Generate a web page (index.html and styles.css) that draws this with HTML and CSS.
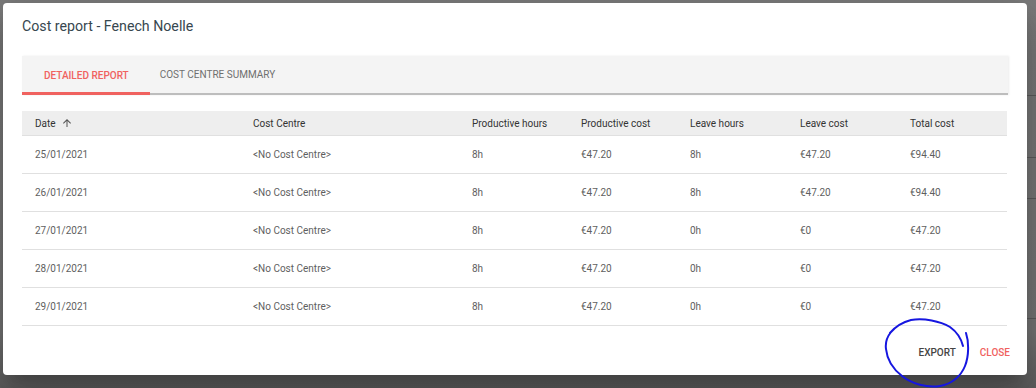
FILE: index.html
```html
<!DOCTYPE html>
<html lang="en">
<head>
    <meta charset="UTF-8">
    <title>Cost report - Fenech Noelle</title>
    <link rel="stylesheet" href="styles.css">
</head>
<body>
    <div class="page-behind">
        <div class="edge-right">
            <span class="edge-line" style="top: 95px"></span>
            <span class="edge-line" style="top: 157px"></span>
            <span class="edge-line" style="top: 198px"></span>
            <span class="edge-line" style="top: 318px"></span>
        </div>
    </div>

    <div class="dialog">
        <h1 class="dialog-title">Cost report - Fenech Noelle</h1>

        <div class="tabs">
            <div class="tab active">Detailed report</div>
            <div class="tab">Cost centre summary</div>
        </div>

        <table class="report">
            <colgroup>
                <col style="width: 218px">
                <col style="width: 219px">
                <col style="width: 109px">
                <col style="width: 109px">
                <col style="width: 110px">
                <col style="width: 110px">
                <col>
            </colgroup>
            <thead>
                <tr>
                    <th>
                        <span class="sort">Date
                            <svg class="sort-icon" viewBox="0 0 24 24" width="12" height="12">
                                <path d="M4 12l1.41 1.41L11 7.83V20h2V7.83l5.58 5.59L20 12l-8-8-8 8z" fill="#555"/>
                            </svg>
                        </span>
                    </th>
                    <th>Cost Centre</th>
                    <th>Productive hours</th>
                    <th>Productive cost</th>
                    <th>Leave hours</th>
                    <th>Leave cost</th>
                    <th>Total cost</th>
                </tr>
            </thead>
            <tbody>
                <tr>
                    <td>25/01/2021</td><td>&lt;No Cost Centre&gt;</td><td>8h</td><td>€47.20</td><td>8h</td><td>€47.20</td><td>€94.40</td>
                </tr>
                <tr>
                    <td>26/01/2021</td><td>&lt;No Cost Centre&gt;</td><td>8h</td><td>€47.20</td><td>8h</td><td>€47.20</td><td>€94.40</td>
                </tr>
                <tr>
                    <td>27/01/2021</td><td>&lt;No Cost Centre&gt;</td><td>8h</td><td>€47.20</td><td>0h</td><td>€0</td><td>€47.20</td>
                </tr>
                <tr>
                    <td>28/01/2021</td><td>&lt;No Cost Centre&gt;</td><td>8h</td><td>€47.20</td><td>0h</td><td>€0</td><td>€47.20</td>
                </tr>
                <tr>
                    <td>29/01/2021</td><td>&lt;No Cost Centre&gt;</td><td>8h</td><td>€47.20</td><td>0h</td><td>€0</td><td>€47.20</td>
                </tr>
            </tbody>
        </table>

        <div class="actions">
            <button class="btn">Export</button>
            <button class="btn btn-close">Close</button>
        </div>
    </div>

    <!-- hand drawn mark around the export button -->
    <svg class="scribble" viewBox="0 0 1036 388" width="1036" height="388">
        <path d="M890 333 C896 326 903 322 911 320 C924 318 940 321 950 327 C957 332 961 338 963 346
                 M966 333 C969 342 969 356 965 366 C961 376 952 384 940 386 C927 388 912 384 902 376
                 C893 369 887 359 886 349 C885 342 887 337 891 332"
              fill="none" stroke="#1616e0" stroke-width="2" stroke-linecap="round"/>
    </svg>
</body>
</html>
```

FILE: styles.css
```css
body {
    margin: 0;
    width: 1036px;
    height: 388px;
    overflow: hidden;
    background: #7a7a7a;
    font-family: Roboto, "Liberation Sans", Arial, sans-serif;
    position: relative;
}
.page-behind {
    position: absolute;
    left: 0;
    top: 0;
    right: 0;
    bottom: 0;
    background: linear-gradient(#7b7b7b, #757575 85%, #5e5e5e);
}
.edge-right {
    position: absolute;
    right: 0;
    top: 0;
    width: 12px;
    height: 100%;
}
.edge-line {
    position: absolute;
    left: 0;
    right: 0;
    height: 1px;
    background: #5c5c5c;
}
.dialog {
    position: relative;
    margin: 3px 0 0 3px;
    width: 1024px;
    height: 372px;
    box-sizing: border-box;
    padding: 11px 19px 0 19px;
    background: #fff;
    border-radius: 4px;
    box-shadow: 0 11px 15px -7px rgba(0, 0, 0, 0.2), 0 24px 38px 3px rgba(0, 0, 0, 0.14), 0 9px 46px 8px rgba(0, 0, 0, 0.12);
}
.dialog-title {
    margin: 0;
    font-size: 14.2px;
    line-height: 24px;
    font-weight: 400;
    color: #37474f;
}
.tabs {
    display: flex;
    margin-top: 18px;
    height: 37px;
    background: #f4f4f4;
    border-bottom: 2px solid #bdbdbd;
    box-shadow: 1px 0 2px rgba(0, 0, 0, 0.08);
}
.tab {
    display: flex;
    align-items: center;
    padding: 0 10px;
    white-space: nowrap;
    font-size: 10px;
    font-weight: 400;
    text-transform: uppercase;
    color: #6f6f6f;
}
.tab.active {
    padding: 0 21px 0 22px;
    color: #f0625f;
    font-weight: 500;
    box-shadow: inset 0 -3px 0 #f0625f;
    margin-bottom: -2px;
}
.report {
    margin-top: 16px;
    width: 985px;
    border-collapse: collapse;
    table-layout: fixed;
    font-size: 10px;
}
.report th {
    height: 24px;
    padding: 0 0 0 13px;
    background: #eeeeee;
    text-align: left;
    font-weight: 400;
    color: #333;
    border-bottom: 1px solid #e0e0e0;
}
.report td {
    height: 37px;
    padding: 0 0 0 13px;
    color: #5f5f5f;
    border-bottom: 1px solid #e0e0e0;
}
.sort {
    display: inline-flex;
    align-items: center;
    gap: 5px;
}
.actions {
    display: flex;
    justify-content: flex-end;
    gap: 8px;
    margin-top: 15px;
    margin-right: -10px;
}
.btn {
    border: none;
    background: none;
    padding: 0 8px;
    height: 22px;
    font-family: inherit;
    font-size: 10px;
    font-weight: 500;
    text-transform: uppercase;
    color: #444;
    cursor: pointer;
}
.btn-close {
    color: #f0625f;
}
.scribble {
    position: absolute;
    left: 0;
    top: 0;
    pointer-events: none;
}
```
